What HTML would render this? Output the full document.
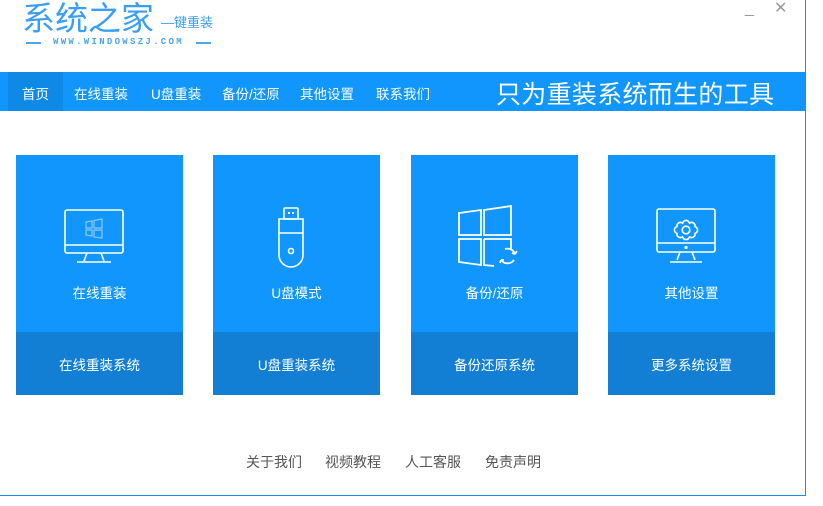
<!DOCTYPE html>
<html><head><meta charset="utf-8"><style>
*{margin:0;padding:0;box-sizing:border-box}
body{width:823px;height:506px;background:#fff;font-family:"Liberation Sans","Noto Sans CJK SC",sans-serif;position:relative;overflow:hidden}
.win{position:absolute;left:0;top:0;width:806px;height:496px;border-right:1px solid #1e8ee8;border-bottom:1px solid #1e8ee8}
.logo{position:absolute;left:22px;top:-8px;font-size:33px;color:#3a9ff2;letter-spacing:0px}
.sub{position:absolute;left:161px;top:12px;font-size:13px;color:#3a9ff2}
.url{position:absolute;left:53px;top:37px;font-size:9px;color:#4aa6ef;letter-spacing:2.3px;font-family:"Liberation Mono",monospace;font-weight:bold}
.ln{position:absolute;top:42px;height:1.5px;width:15px;background:#4aa6ef}
.ctl{position:absolute;color:#999;font-size:16px}
.nav{position:absolute;left:0;top:72px;width:805px;height:39px;background:#1096fd}
.nav span{position:absolute;top:11px;color:#fff;font-size:13.5px}
.nav .act{position:absolute;left:8px;top:0;width:55px;height:39px;background:#0f89e6}
.slogan{position:absolute;left:496px;top:3px;color:#fff;font-size:25px;letter-spacing:0.3px}
.card{position:absolute;top:155px;width:167px;height:240px;background:#1096fd}
.card .bot{position:absolute;left:0;top:177px;width:167px;height:63px;background:#127fd4;color:#fff;font-size:13.5px;text-align:center;line-height:68px}
.card .t{position:absolute;left:0;top:127px;width:167px;text-align:center;color:#fff;font-size:13.5px}
.card svg{position:absolute;left:0;top:0}
.foot{position:absolute;top:452px;font-size:14px;color:#555}
</style></head><body>
<div class="win"></div>
<div class="logo">系统之家</div>
<div class="sub">—键重装</div>
<div class="ln" style="left:26px"></div>
<div class="url">WWW.WINDOWSZJ.COM</div>
<div class="ln" style="left:196px"></div>
<div class="ctl" style="left:745px;top:0px">_</div>
<div class="ctl" style="left:774px;top:-2px">✕</div>
<div class="nav">
<div class="act"></div>
<span style="left:22px">首页</span>
<span style="left:74px">在线重装</span>
<span style="left:151px">U盘重装</span>
<span style="left:222px">备份/还原</span>
<span style="left:300px">其他设置</span>
<span style="left:376px">联系我们</span>
<div class="slogan">只为重装系统而生的工具</div>
</div>

<div class="card" style="left:16px">
<svg width="167" height="130" fill="none" stroke="#fff" stroke-width="1.6">
<rect x="49" y="55" width="58" height="43" rx="2"/><line x1="49" y1="90" x2="107" y2="90"/>
<line x1="71" y1="98" x2="68" y2="106"/><line x1="85" y1="98" x2="88" y2="106"/><line x1="61" y1="107" x2="95" y2="107"/>
<g stroke="#8cc8f8" stroke-width="1.2"><path d="M70 67 L76 66 V73 H70 Z M78 65.5 L86 64 V73 H78 Z M70 75 H76 V81 L70 80 Z M78 75 H86 V83 L78 82 Z"/></g>
</svg>
<div class="t">在线重装</div><div class="bot">在线重装系统</div></div>

<div class="card" style="left:213px">
<svg width="167" height="130" fill="none" stroke="#fff" stroke-width="1.6">
<rect x="71" y="53" width="14" height="11" rx="1"/><rect x="75" y="57" width="2" height="2" fill="#fff" stroke="none"/><rect x="79" y="57" width="2" height="2" fill="#fff" stroke="none"/>
<path d="M66 64 H90 V100 A12 12 0 0 1 66 100 Z"/><line x1="66" y1="78" x2="90" y2="78"/><circle cx="78" cy="96" r="2.5"/>
</svg>
<div class="t">U盘模式</div><div class="bot">U盘重装系统</div></div>

<div class="card" style="left:411px">
<svg width="167" height="130" fill="none" stroke="#fff" stroke-width="1.8">
<path d="M48 58 L70 55 V80 H48 Z M73 55 L100 51 V80 H73 Z M48 84 H70 V110 L48 107 Z M73 84 H100 V94 M73 84 V110 L83 111"/>
<path d="M94 94 A8 8 0 0 1 104 99 M103 105 A8 8 0 0 1 90 105"/><path d="M104 99 l2 -3 M104 99 l-3 -1 M90 105 l-1 3 M90 105 l3 0"/>
</svg>
<div class="t">备份/还原</div><div class="bot">备份还原系统</div></div>

<div class="card" style="left:608px">
<svg width="167" height="130" fill="none" stroke="#fff" stroke-width="1.6">
<rect x="49" y="54" width="58" height="43" rx="2"/><line x1="49" y1="88" x2="107" y2="88"/>
<circle cx="78" cy="92.5" r="0.8" fill="#fff"/>
<line x1="72" y1="97" x2="69" y2="105"/><line x1="84" y1="97" x2="87" y2="105"/><line x1="62" y1="107" x2="94" y2="107"/>
<circle cx="78" cy="75" r="3.8"/>
<path d="M78 75 m-3.5 -10 a3.5 3.5 0 0 1 7 0 l0 0 a3.5 3.5 0 0 1 5.6 3.2 a3.5 3.5 0 0 1 0 6.8 a3.5 3.5 0 0 1 0 6.8 M78 75" stroke="none"/>
<path d="M74.8 64.5 a3.4 3.4 0 0 1 6.4 0 L81.5 65 a3.4 3.4 0 0 1 5.5 3.2 L87.3 68.6 a3.4 3.4 0 0 1 0 6.4 L87 75.4 a3.4 3.4 0 0 1 -5.5 3.2 L81.2 79.1 a3.4 3.4 0 0 1 -6.4 0 L74.5 78.6 a3.4 3.4 0 0 1 -5.5 -3.2 L68.7 75 a3.4 3.4 0 0 1 0 -6.4 L69 68.2 a3.4 3.4 0 0 1 5.5 -3.2 Z" transform="translate(0,3.2)"/>
</svg>
<div class="t">其他设置</div><div class="bot">更多系统设置</div></div>

<div class="foot" style="left:246px">关于我们</div>
<div class="foot" style="left:325px">视频教程</div>
<div class="foot" style="left:405px">人工客服</div>
<div class="foot" style="left:485px">免责声明</div>
</body></html>
